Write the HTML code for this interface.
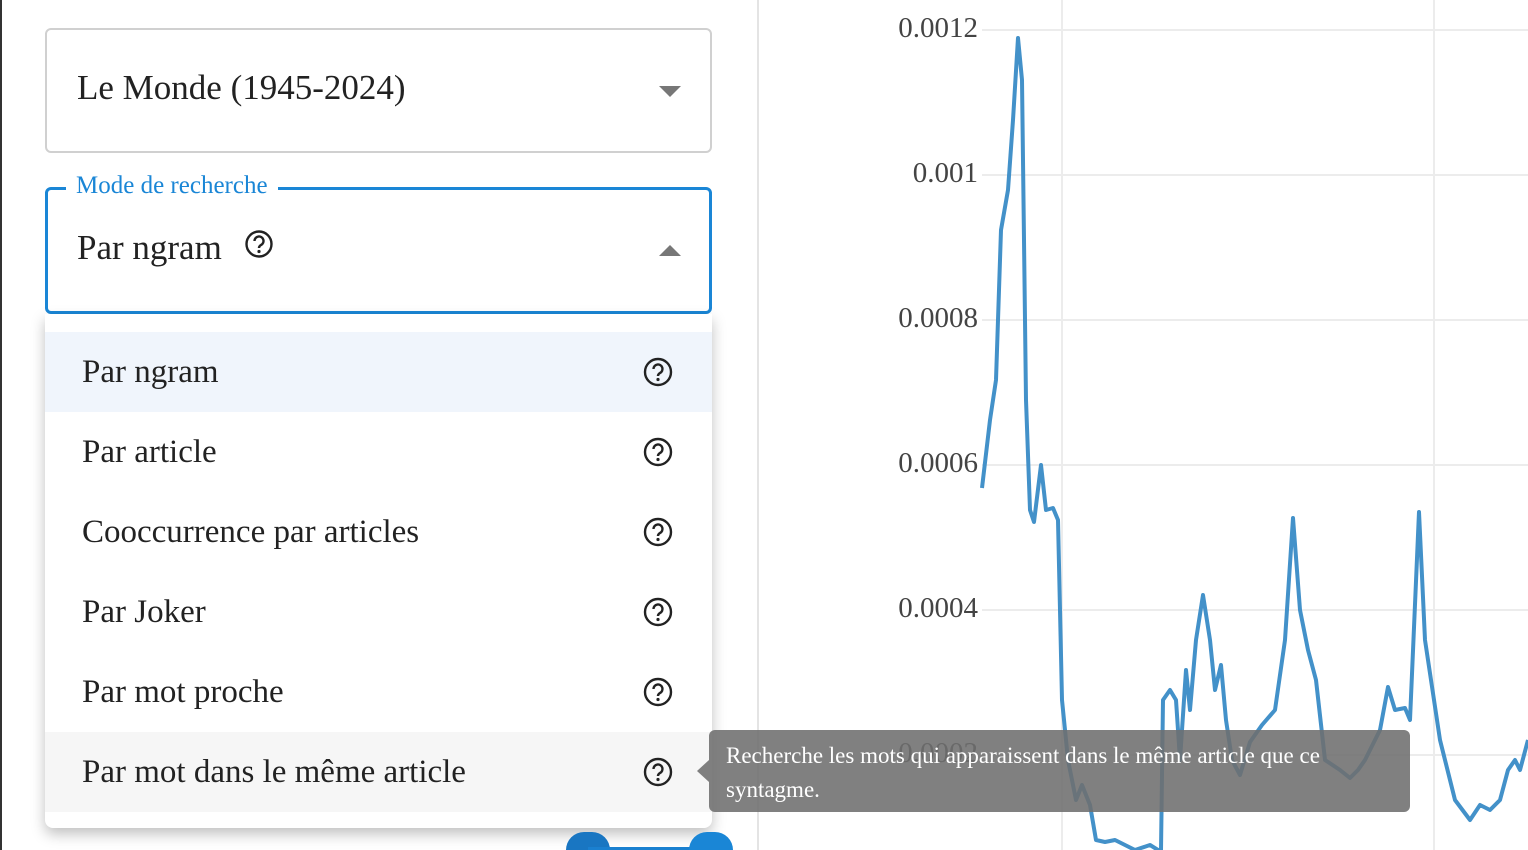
<!DOCTYPE html>
<html style="width:1528px;height:850px;overflow:hidden"><head><meta charset="utf-8"><style>
*{box-sizing:border-box;margin:0;padding:0}
body{width:1528px;height:850px;overflow:hidden;background:#fff;font-family:"Liberation Serif",serif;position:relative;color:#222}
.lb{position:absolute;left:0;top:0;width:2px;height:850px;background:#333}
.div{position:absolute;left:757px;top:0;width:2px;height:850px;background:#e4e4e4}
.box1{position:absolute;left:45px;top:28px;width:667px;height:125px;border:2px solid #d0d0d0;border-radius:6px}
.box2{position:absolute;left:45px;top:187px;width:667px;height:127px;border:3px solid #1a86d6;border-radius:6px}
.t{position:absolute;font-size:35px;color:#222}
.lbl{position:absolute;left:66px;top:172px;background:#fff;padding:0 10px;color:#1a86d6;font-size:25px}
.tri{position:absolute;width:0;height:0;border-left:11px solid transparent;border-right:11px solid transparent}
.menu{position:absolute;left:45px;top:314px;width:667px;height:514px;background:#fff;border-radius:0 0 8px 8px;box-shadow:0 6px 14px rgba(0,0,0,.25)}
.it{position:absolute;left:0;width:667px;height:80px;font-size:33px;padding-left:37px;line-height:80px;color:#222}
.q{position:absolute;width:30px;height:30px}
.tip{position:absolute;left:709px;top:730px;width:701px;height:82px;background:rgba(110,110,110,.88);border-radius:6px;color:#fff;font-size:23px;line-height:34px;padding:9px 17px}
.tip:before{content:"";position:absolute;left:-12px;top:30px;border-top:11px solid transparent;border-bottom:11px solid transparent;border-right:12px solid rgba(110,110,110,.88)}
.ax{position:absolute;font-size:29px;color:#444;text-align:right;width:110px;left:868px}
</style></head><body>
<div class="lb"></div>
<svg style="position:absolute;left:0;top:0" width="1528" height="850">
<g stroke="#ececec" stroke-width="2">
<line x1="982" y1="30" x2="1528" y2="30"/><line x1="982" y1="175" x2="1528" y2="175"/><line x1="982" y1="320" x2="1528" y2="320"/><line x1="982" y1="465" x2="1528" y2="465"/><line x1="982" y1="610" x2="1528" y2="610"/><line x1="982" y1="755" x2="1528" y2="755"/>
<line x1="1062" y1="0" x2="1062" y2="850"/><line x1="1434" y1="0" x2="1434" y2="850"/>
</g>
<path fill="none" stroke="#4391c9" stroke-width="4" stroke-linejoin="round" d="M982,488 L990,420 L996,380 L1001,230 L1008,190 L1013,120 L1018,38 L1022,80 L1026,400 L1030,510 L1034,522 L1041,465 L1046,510 L1053,508 L1058,520 L1062,700 L1068,760 L1076,800 L1082,785 L1090,805 L1096,840 L1105,842 L1115,840 L1125,845 L1135,850 L1150,845 L1158,850 L1161,850 L1163,700 L1170,690 L1176,700 L1180,760 L1186,670 L1190,710 L1196,640 L1203,595 L1210,640 L1215,690 L1221,665 L1226,720 L1232,760 L1240,775 L1250,742 L1262,725 L1275,710 L1285,640 L1293,518 L1300,610 L1308,650 L1316,680 L1325,760 L1340,770 L1350,778 L1358,770 L1365,760 L1380,730 L1388,687 L1395,710 L1405,708 L1410,720 L1419,512 L1425,640 L1440,740 L1455,800 L1470,820 L1480,805 L1490,810 L1500,800 L1508,770 L1515,760 L1520,770 L1528,740"/>
</svg>
<div class="ax" style="top:12px">0.0012</div>
<div class="ax" style="top:157px">0.001</div>
<div class="ax" style="top:302px">0.0008</div>
<div class="ax" style="top:447px">0.0006</div>
<div class="ax" style="top:592px">0.0004</div>
<div class="ax" style="top:737px">0.0002</div>
<div class="div"></div>
<div class="box1"></div>
<div class="t" style="left:77px;top:68px">Le Monde (1945-2024)</div>
<div class="tri" style="left:659px;top:86px;border-top:11px solid #777"></div>
<div class="box2"></div>
<div class="lbl">Mode de recherche</div>
<div class="t" style="left:77px;top:228px">Par ngram</div>
<svg class="q" style="left:244px;top:229px" viewBox="0 0 30 30"><circle cx="15" cy="15" r="12.5" fill="none" stroke="#222" stroke-width="2.4"/><path d="M10.5,12 a4.5,4.5 0 1 1 6.5,4 c-1.5,0.8 -2,1.5 -2,3" fill="none" stroke="#222" stroke-width="2.4"/><circle cx="15" cy="22.5" r="1.6" fill="#222"/></svg>
<div class="tri" style="left:659px;top:245px;border-bottom:11px solid #777"></div>
<div class="menu">
<div class="it" style="top:18px;background:#f0f5fc">Par ngram</div>
<div class="it" style="top:98px">Par article</div>
<div class="it" style="top:178px">Cooccurrence par articles</div>
<div class="it" style="top:258px">Par Joker</div>
<div class="it" style="top:338px">Par mot proche</div>
<div class="it" style="top:418px;background:#f6f6f6">Par mot dans le même article</div>
</div>
<svg width="0" height="0" style="position:absolute"><defs><g id="qq"><circle cx="15" cy="15" r="13" fill="none" stroke="#222" stroke-width="2.4"/><path d="M10.5,12 a4.5,4.5 0 1 1 6.5,4 c-1.5,0.8 -2,1.5 -2,3" fill="none" stroke="#222" stroke-width="2.4"/><circle cx="15" cy="22.5" r="1.6" fill="#222"/></g></defs></svg>
<svg class="q" style="left:643px;top:357px" viewBox="0 0 30 30"><use href="#qq"/></svg>
<svg class="q" style="left:643px;top:437px" viewBox="0 0 30 30"><use href="#qq"/></svg>
<svg class="q" style="left:643px;top:517px" viewBox="0 0 30 30"><use href="#qq"/></svg>
<svg class="q" style="left:643px;top:597px" viewBox="0 0 30 30"><use href="#qq"/></svg>
<svg class="q" style="left:643px;top:677px" viewBox="0 0 30 30"><use href="#qq"/></svg>
<svg class="q" style="left:643px;top:757px" viewBox="0 0 30 30"><use href="#qq"/></svg>
<div class="tip">Recherche les mots qui apparaissent dans le même article que ce syntagme.</div>
<div style="position:absolute;left:566px;top:832px;width:44px;height:18px;border-radius:22px 22px 0 0;background:#1976c2"></div>
<div style="position:absolute;left:588px;top:847px;width:124px;height:3px;background:#1a80d0"></div>
<div style="position:absolute;left:689px;top:832px;width:44px;height:18px;border-radius:22px 22px 0 0;background:#1a86d6"></div>
</body></html>
